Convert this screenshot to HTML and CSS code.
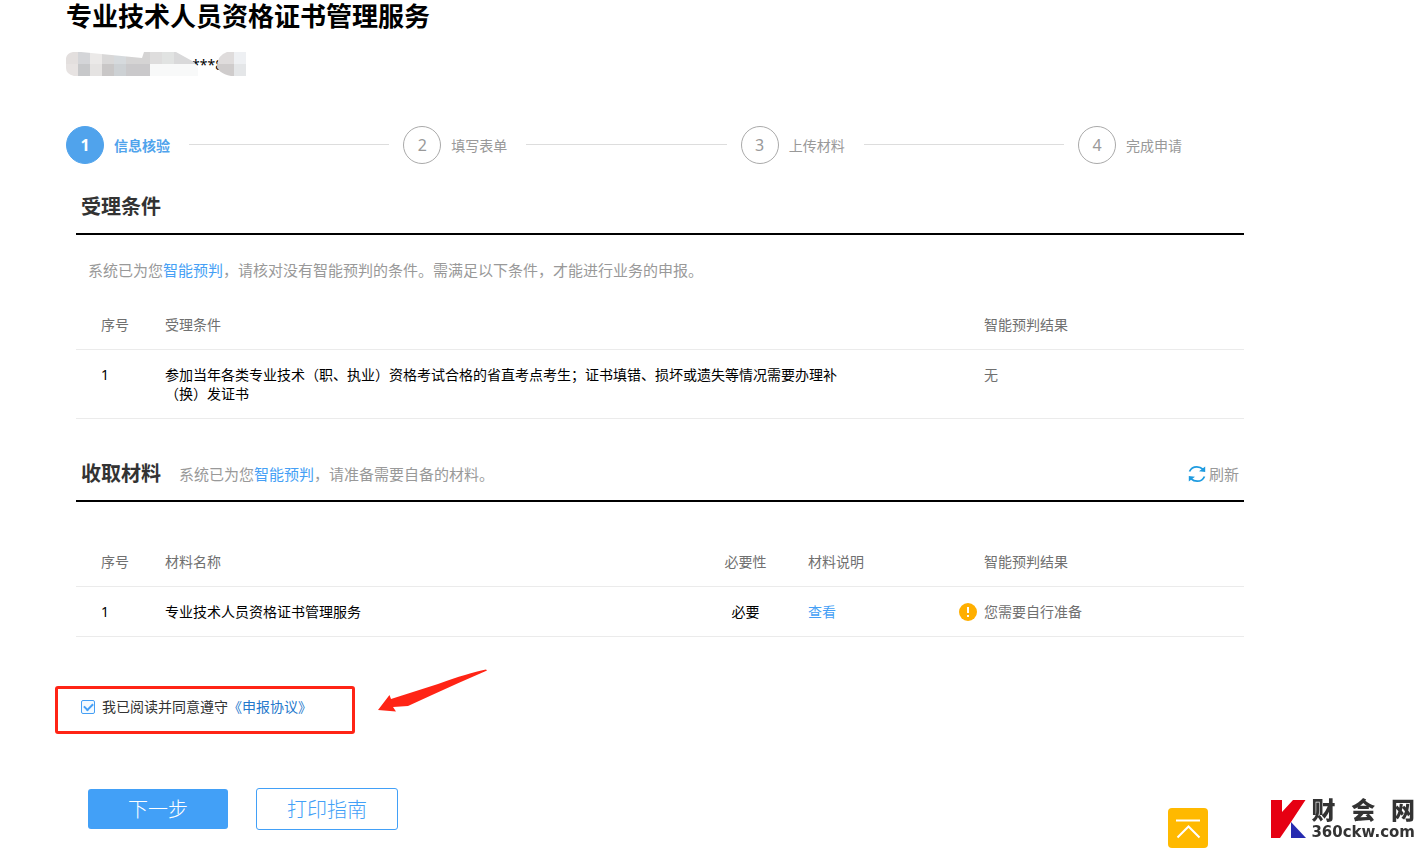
FILE: index.html
```html
<!DOCTYPE html>
<html lang="zh-CN">
<head>
<meta charset="utf-8">
<title>专业技术人员资格证书管理服务</title>
<link rel="stylesheet" href="styles.css">
</head>
<body>
<main class="page">
  <h1 class="title">专业技术人员资格证书管理服务</h1>
  <div class="account">
    <span class="account-text">***8</span>
    <svg class="account-mask" width="180" height="24" viewBox="0 0 180 24" aria-hidden="true">
      <clipPath id="mask-shape">
        <path d="M7 0H15L76 6L78 0H110L128 10L132 16V24H8Q0 22 0 16V6Q1 1 7 0ZM161 0H180V24H165Q151 21 151 13Q152 3 161 0Z"/>
      </clipPath>
      <g clip-path="url(#mask-shape)">
        <path fill="#e3dfde" d="M0 0h12v12H0z"/><path fill="#e7e3e2" d="M0 12h12v12H0z"/>
        <path fill="#d4d5d8" d="M12 0h12v12H12z"/><path fill="#c7c8ca" d="M12 12h12v12H12z"/>
        <path fill="#ebe9e8" d="M24 0h12v12H24z"/><path fill="#e5e3e2" d="M24 12h12v12H24z"/>
        <path fill="#d9d8d8" d="M36 0h12v12H36z"/><path fill="#c9c7c7" d="M36 12h12v12H36z"/>
        <path fill="#d6dadd" d="M48 0h12v12H48z"/><path fill="#cdd1d4" d="M48 12h12v12H48z"/>
        <path fill="#d5d4d4" d="M60 0h24v12H60z"/><path fill="#cac9cb" d="M60 12h24v12H60z"/>
        <path fill="#dedddd" d="M84 0h12v12H84z"/><path fill="#e1e3e2" d="M96 0h12v12H96z"/>
        <path fill="#d9d9da" d="M108 0h24v12h-24z"/><path fill="#f8f9f9" d="M84 12h48v12H84z"/>
        <path fill="#dfdcdc" d="M150 0h18v12h-18z"/><path fill="#cfcccc" d="M150 12h18v12h-18z"/>
        <path fill="#eef0f3" d="M168 0h12v12h-12z"/><path fill="#e4e6e8" d="M168 12h12v12h-12z"/>
      </g>
    </svg>
  </div>

  <ol class="steps">
    <li class="step step-active"><span class="step-num">1</span><span>信息核验</span></li>
    <li class="step"><span class="step-num">2</span><span>填写表单</span></li>
    <li class="step"><span class="step-num">3</span><span>上传材料</span></li>
    <li class="step"><span class="step-num">4</span><span>完成申请</span></li>
  </ol>

  <section class="section">
    <header class="section-head"><h2>受理条件</h2></header>
    <p class="hint intro">系统已为您<span class="blue">智能预判</span>，请核对没有智能预判的条件。需满足以下条件，才能进行业务的申报。</p>
    <table class="grid">
      <colgroup><col class="col-index"><col><col class="col-result"></colgroup>
      <thead><tr><th class="index">序号</th><th>受理条件</th><th class="result">智能预判结果</th></tr></thead>
      <tbody><tr><td class="index">1</td><td class="condition">参加当年各类专业技术（职、执业）资格考试合格的省直考点考生；证书填错、损坏或遗失等情况需要办理补（换）发证书</td><td class="result">无</td></tr></tbody>
    </table>
  </section>

  <section class="section materials">
    <header class="section-head">
      <h2>收取材料</h2>
      <p class="hint">系统已为您<span class="blue">智能预判</span>，请准备需要自备的材料。</p>
      <button class="refresh" type="button">
        <svg width="18" height="18" viewBox="0 0 18 18" aria-hidden="true">
          <g fill="none" stroke="#1e9be0" stroke-width="1.8"><path d="M1.500 6.500C2.800 3.600 5.700 1.800 8.800 1.800c2.500 0 4.400.800 6 2.400"/><path d="M16.500 11.500C15.200 14.400 12.300 16.200 9.200 16.200c-2.500 0-4.400-.800-6-2.400"/></g>
          <path fill="#1e9be0" d="M17.200 1.500V7L11 6.300zM.8 16.500V11l6.200.700z"/>
        </svg>
        <span>刷新</span>
      </button>
    </header>
    <table class="grid">
      <colgroup><col class="col-index"><col><col class="col-need"><col class="col-note"><col class="col-result"></colgroup>
      <thead><tr><th class="index">序号</th><th>材料名称</th><th class="need">必要性</th><th>材料说明</th><th class="result">智能预判结果</th></tr></thead>
      <tbody><tr><td class="index">1</td><td>专业技术人员资格证书管理服务</td><td class="need">必要</td><td><a class="blue" href="#">查看</a></td>
        <td class="notice"><div class="notice-row">
          <svg width="18" height="18" viewBox="0 0 18 18" aria-hidden="true"><circle cx="9" cy="9" r="9" fill="#ffaf00"/><path d="M9 4v6M9 12v2" stroke="#fff" stroke-width="2"/></svg>
          <span>您需要自行准备</span></div></td></tr></tbody>
    </table>
  </section>

  <div class="agreement">
    <div class="agree-box">
      <input class="check" type="checkbox" id="agree" checked>
      <label for="agree">我已阅读并同意遵守</label><a class="agree-link" href="#">《申报协议》</a>
    </div>
    <svg class="arrow" width="110" height="44" viewBox="0 0 110 44" aria-hidden="true"><path fill="#ff2415" d="M0 41L11.500 26L13 30L60 15Q90 4 108 0.500L109 1.500Q80 14 54 26L30 37L15 38L18 42.500Z"/></svg>
  </div>

  <div class="actions">
    <button class="btn btn-primary" type="button">下一步</button>
    <button class="btn btn-outline" type="button">打印指南</button>
  </div>
</main>

<button class="to-top" type="button" aria-label="返回顶部">
  <svg width="40" height="40" viewBox="0 0 40 40" aria-hidden="true"><path d="M8 12.500h24M9.500 29.500L20.500 18.500l11 11" fill="none" stroke="#fff" stroke-width="2"/></svg>
</button>

<div class="brand">
  <svg width="35" height="38" viewBox="0 0 35 38" aria-hidden="true"><path fill="#e60012" d="M0 0h11v12L22 0h12.500L20 22L9 38H0z"/><path fill="#262bb0" d="M20 22L35 38H20z"/></svg>
  <div class="brand-text">
    <div class="brand-name"><span>财</span><span>会</span><span>网</span></div>
    <div class="brand-url">360ckw.com</div>
  </div>
</div>
</body>
</html>
```
FILE: styles.css
```css
* { box-sizing: border-box; }
body {
  margin: 0;
  background: #fff;
  color: #000;
  font: 14px/19px "Noto Sans", "Noto Sans CJK SC", sans-serif;
}
h1, h2, p, ol { margin: 0; padding: 0; }
button { padding: 0; border: 0; background: none; font: inherit; cursor: pointer; }
a { text-decoration: none; }
svg { display: block; flex: none; }
.blue { color: #459ff5; }

.page { margin: 0 183px 0 66px; }
.title { font-size: 26px; line-height: 32px; }

.account { position: relative; width: 180px; height: 24px; margin-top: 20px; padding-left: 126px; line-height: 25px; }
.account-mask { position: absolute; left: 0; top: 0; }

.steps { display: flex; margin: 50px 62px 0 0; list-style: none; color: #999; }
.step { display: flex; align-items: center; flex: 1 1 auto; gap: 10px; white-space: nowrap; }
.step:last-child { flex: none; }
.step:not(:last-child)::after { content: ""; flex: 1; height: 1px; margin: 0 14px 2px 9px; background: #ddd; }
.step-num {
  display: flex; align-items: center; justify-content: center;
  width: 38px; height: 38px;
  border: 1px solid #aaa; border-radius: 50%;
  font-size: 16px;
}
.step-active { color: #50a3ec; font-weight: bold; }
.step-active .step-num { border-color: #50a3ec; background: #50a3ec; color: #fff; }

.section { margin: 29px 0 0 10px; }
.section.materials { margin-top: 41px; }
.section-head { display: flex; align-items: center; padding: 0 5px 12px; border-bottom: 2px solid #000; }
.section-head h2 { margin-right: 18px; color: #333; font-size: 20px; line-height: 28px; }
.hint { color: #999; font-size: 15px; line-height: 20px; }
.intro { margin: 25px 0 20px 12px; }
.refresh { display: flex; align-items: center; gap: 3px; margin-left: auto; color: #999; font-size: 15px; line-height: 20px; }

.grid { width: 100%; border-collapse: separate; border-spacing: 0; table-layout: fixed; }
.materials .grid { margin-top: 35px; }
.col-index { width: 89px; }
.col-need { width: 84px; }
.col-note { width: 151px; }
.col-result { width: 285px; }
.grid th, .grid td { padding: 15px 0; border-bottom: 1px solid #ebebeb; text-align: left; vertical-align: top; }
.grid th { color: #707070; font-weight: normal; }
.grid .index { padding-left: 25px; }
.grid .result { padding-left: 25px; color: #707070; }
.grid .need { padding-right: 41px; text-align: center; white-space: nowrap; }
.grid td.condition { padding-right: 110px; }
.grid .notice { color: #707070; }
.notice-row { display: flex; align-items: center; gap: 7px; }

.agreement { position: relative; margin: 49px 0 0 -11px; }
.agree-box {
  display: flex; align-items: center;
  width: 300px; padding: 8px 23px 14px;
  border: 3px solid #ff2415; border-radius: 3px;
  color: #333; line-height: 20px;
}
.check {
  appearance: none;
  width: 14px; height: 14px; margin: 0 7px 0 0;
  border: 1px solid #459ff5; border-radius: 2px;
  background: #f4faff;
  display: grid; place-items: center;
}
.check:checked::before {
  content: "";
  width: 7px; height: 4px; margin-bottom: 2px;
  border: solid #459ff5; border-width: 0 0 2px 2px;
  transform: rotate(-45deg);
}
.agree-link { color: #2478cc; }
.arrow { position: absolute; left: 323px; top: -17px; }

.actions { display: flex; align-items: center; gap: 28px; margin: 54px 0 0 22px; }
.btn { border-radius: 3px; font-size: 20px; font-weight: 300; line-height: 38px; padding-top: 2px; }
.btn-primary { width: 140px; background: #42a0f7; color: #fff; }
.btn-outline { width: 142px; border: 1px solid #42a0f7; color: #42a0f7; }

.to-top { position: fixed; right: 219px; bottom: 11px; border-radius: 4px; background: #ffb900; }
.brand { position: fixed; right: 12px; bottom: 18px; display: flex; align-items: center; gap: 5px; color: #333; }
.brand-name { display: flex; justify-content: space-between; font-size: 24px; font-weight: 900; line-height: 26px; }
.brand-url { font: bold 15px/18px "DejaVu Sans", sans-serif; }
```
